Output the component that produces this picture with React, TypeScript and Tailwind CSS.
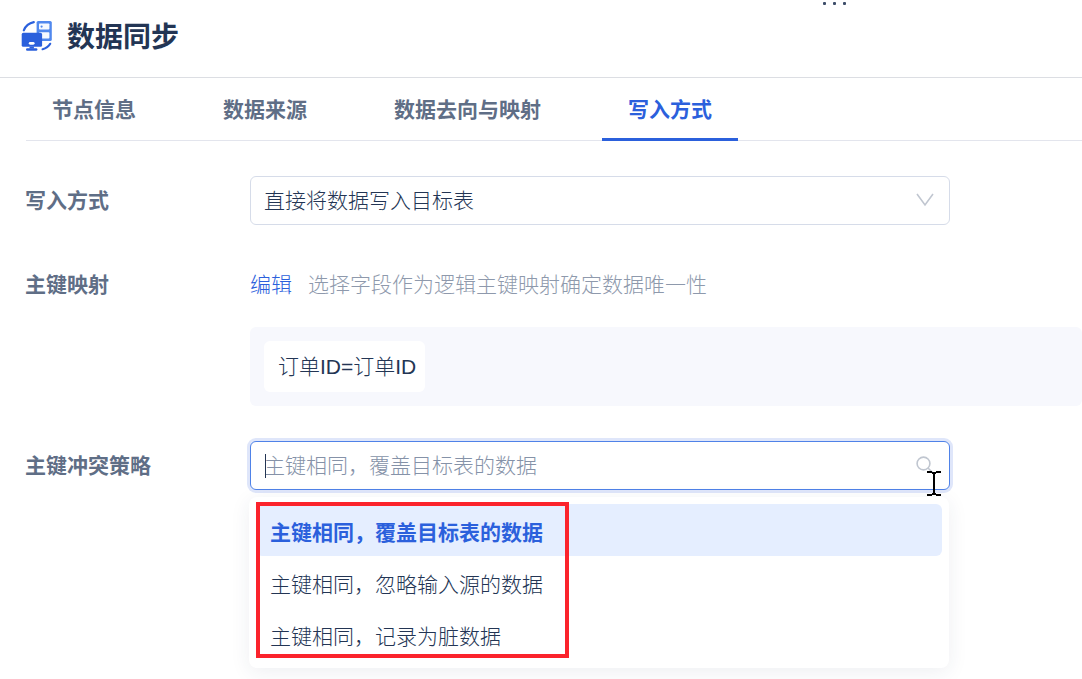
import { useState } from "react"

const tabs = ["节点信息", "数据来源", "数据去向与映射", "写入方式"]

const strategies = [
    "主键相同，覆盖目标表的数据",
    "主键相同，忽略输入源的数据",
    "主键相同，记录为脏数据",
]

const SyncLogo = () => (
    <svg className="size-8 shrink-0" viewBox="0 0 32 32" fill="none" aria-hidden="true">
        <path d="M2.8 10.3C4.6 6 8 3.2 12.8 2.2" stroke="#2b60dc" strokeWidth="2.2" strokeLinecap="round" />
        <path d="M21.6 29.2C25 28.4 27.6 26.6 29.2 23.8" stroke="#2b60dc" strokeWidth="2.2" strokeLinecap="round" />
        <rect x="15.6" y="1" width="15.2" height="20" rx="1.6" fill="#5088ee" />
        <rect x="18" y="3.4" width="10.4" height="6.2" rx="0.8" fill="#f5f9ff" />
        <rect x="18" y="12.2" width="10.4" height="6.4" rx="0.8" fill="#f5f9ff" />
        <circle cx="20.6" cy="6.6" r="1.1" fill="#5088ee" />
        <rect x="0.7" y="12.8" width="20.4" height="14" rx="1.6" fill="#2b60dc" />
        <rect x="7.8" y="21.9" width="5.8" height="2.8" rx="1.4" fill="#fff" />
        <path d="M8.5 26.6h4.4v2H8.5z" fill="#2b60dc" />
        <rect x="5" y="28.2" width="11.4" height="2.6" rx="1.2" fill="#2b60dc" />
    </svg>
)

const Header = () => (
    <header className="flex h-[78px] items-center border-b border-[#dcdee3] pb-1.5 pl-[21px]">
        <SyncLogo />
        <h1 className="ml-3.5 pb-0.5 text-[28px] leading-10 font-bold text-[#233554]">数据同步</h1>
        <button type="button" aria-label="更多" className="mr-[236px] ml-auto flex gap-[7px] self-start pt-0.5">
            <span className="size-[3px] rounded-[1px] bg-[#3d4d69]" />
            <span className="size-[3px] rounded-[1px] bg-[#3d4d69]" />
            <span className="size-[3px] rounded-[1px] bg-[#3d4d69]" />
        </button>
    </header>
)

const App = () => {
    const [activeTab, setActiveTab] = useState(3)
    const [strategy, setStrategy] = useState(0)

    return (
        <div className="min-h-screen overflow-x-hidden bg-white font-['Noto_Sans_CJK_SC',sans-serif] text-[21px] leading-8 font-light text-[#233554]">
            <Header />
            <nav role="tablist" className="ml-[26px] flex h-[63px] gap-[35px] border-b border-[#e3e5ed]">
                {tabs.map((tab, index) => (
                    <button
                        key={tab}
                        type="button"
                        role="tab"
                        aria-selected={index === activeTab}
                        onClick={() => setActiveTab(index)}
                        className={
                            index === activeTab
                                ? "-mb-px shrink-0 border-b-3 border-[#2b60dc] px-[26px] font-bold text-[#2b60dc]"
                                : "-mb-px shrink-0 border-b-3 border-transparent px-[26px] font-bold text-[#5f6e86]"
                        }
                    >
                        {tab}
                    </button>
                ))}
            </nav>

            <form className="grid grid-cols-[225px_1fr] gap-y-[35px] pt-[35px] pl-[25px]">
                <label htmlFor="write-mode" className="py-[7px] font-bold text-[#5f6e86]">写入方式</label>
                <div className="relative h-[49px] w-full max-w-[700px]">
                    <select
                        id="write-mode"
                        className="h-full w-full appearance-none rounded-md border border-[#d6dce9] bg-white px-[13px] pb-[3px] outline-none"
                    >
                        <option>直接将数据写入目标表</option>
                    </select>
                    <svg className="pointer-events-none absolute top-4 right-4 h-4 w-[18px]" viewBox="0 0 18 16" fill="none" aria-hidden="true">
                        <path d="M1 2l8 11 8-11" stroke="#c0c6d0" strokeWidth="1.6" />
                    </svg>
                </div>

                <span className="py-[7px] font-bold text-[#5f6e86]">主键映射</span>
                <div>
                    <div className="flex h-[49px] items-center gap-4 pb-[3px]">
                        <button type="button" className="text-[#2b60dc]">编辑</button>
                        <span className="text-[#8e99ac]">选择字段作为逻辑主键映射确定数据唯一性</span>
                    </div>
                    <div className="mt-[18px] flex rounded-md bg-[#f7f8fd] p-3.5">
                        <span className="rounded-md bg-white pt-2.5 pr-[9px] pb-[9px] pl-3.5 font-['Liberation_Sans','Noto_Sans_CJK_SC',sans-serif]">
                            订单ID=订单ID
                        </span>
                    </div>
                </div>

                <label htmlFor="strategy" className="py-[7px] font-bold text-[#5f6e86]">主键冲突策略</label>
                <div className="relative h-[49px] w-full max-w-[700px]">
                    <input
                        id="strategy"
                        type="text"
                        placeholder={strategies[strategy]}
                        className="h-full w-full rounded-md border border-[#4f82e8] bg-white px-[13px] pb-[3px] ring-3 ring-[#dfe6fa] outline-none placeholder:text-[#8592a8]"
                    />
                    <span className="absolute top-[13px] left-[15px] h-6 w-px bg-[#233554]" />
                    <svg className="absolute top-[15px] right-4 size-[18px]" viewBox="0 0 18 18" fill="none" stroke="#c0c6d0" strokeWidth="1.6" aria-hidden="true">
                        <circle cx="7.5" cy="7.5" r="6.4" />
                        <path d="M12 12l5 5" />
                    </svg>

                    <ul role="listbox" className="absolute top-14 right-px -left-px rounded-lg bg-white p-[7px] pb-2 shadow-[0_4px_20px_rgba(35,53,84,0.08)]">
                        {strategies.map((item, index) => (
                            <li key={item} role="option" aria-selected={index === strategy}>
                                <button
                                    type="button"
                                    onClick={() => setStrategy(index)}
                                    className={
                                        index === strategy
                                            ? "h-[52px] w-full rounded-md bg-[#e5eeff] px-3.5 pt-0.5 text-left font-bold text-[#2b60dc]"
                                            : "h-[52px] w-full rounded-md px-3.5 pt-0.5 text-left"
                                    }
                                >
                                    {item}
                                </button>
                            </li>
                        ))}
                    </ul>

                    {/* highlight frame around the options */}
                    <div className="pointer-events-none absolute top-[61px] left-1.5 h-[156px] w-[313px] border-4 border-[#fb232c]" />

                    {/* text cursor */}
                    <svg className="pointer-events-none absolute top-[30px] right-[9px] h-[26px] w-3.5" viewBox="0 0 14 26" fill="none" stroke="#000" strokeWidth="2" aria-hidden="true">
                        <path d="M0 1h5M9 1h5M0 24h5M9 24h5M5 2h4M5 23h4M7 2v21" />
                    </svg>
                </div>
            </form>
        </div>
    )
}

export default App
